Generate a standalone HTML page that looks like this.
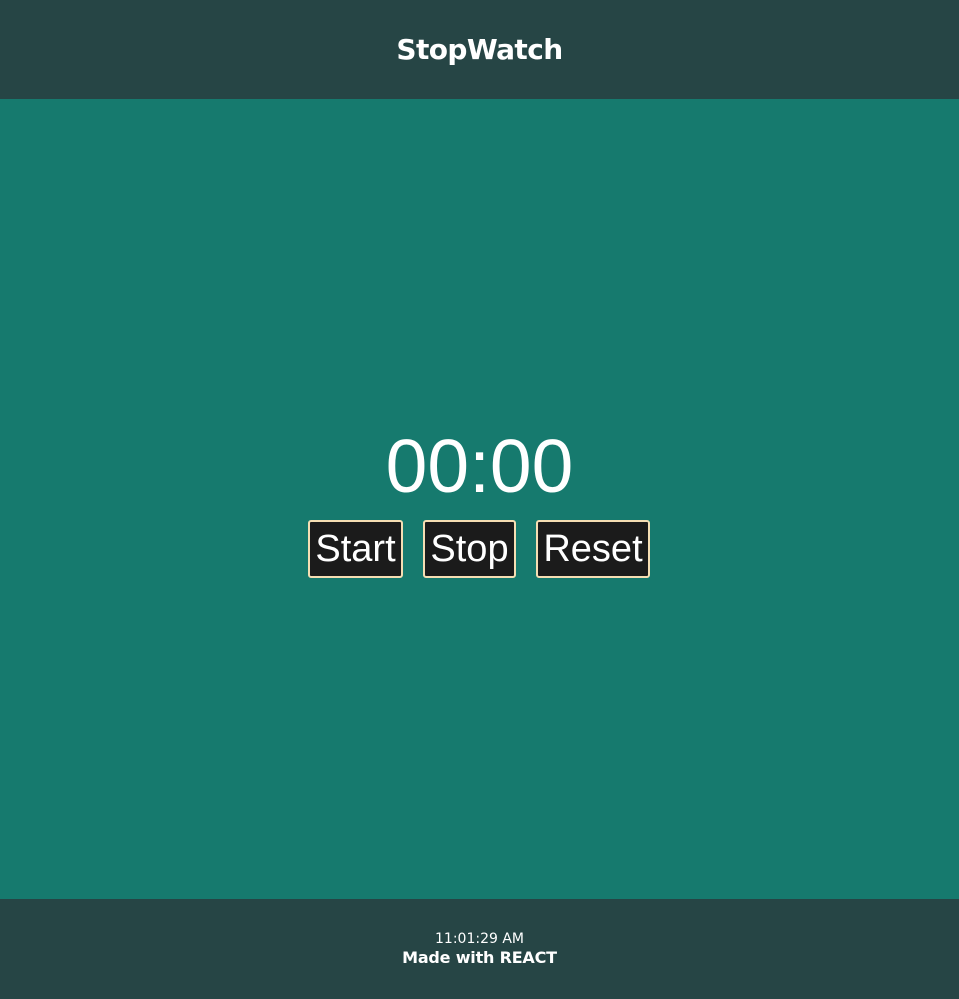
<!DOCTYPE html>
<html><head><style>
html,body{margin:0;padding:0;width:959px;height:999px;overflow:hidden}
body{font-family:"Liberation Sans",sans-serif;background:#167a6e}
header{height:99px;background:#264545;color:#fff;font-weight:bold;font-size:28px;text-align:center;line-height:99px;font-family:"DejaVu Sans","Liberation Sans",sans-serif;letter-spacing:-0.6px}
main{height:800px;position:relative}
.timer{position:absolute;top:322px;left:0;right:0;text-align:center;color:#fff;font-size:75px;line-height:90px}
.btns{position:absolute;top:421px;left:308px;display:flex;gap:20px}
button{background:#1b1b1b;color:#fff;border:2px solid #f5deb3;border-radius:3px;font-family:"Liberation Sans",sans-serif;font-size:38px;height:58px;padding:0;line-height:54px;text-align:center}
footer{height:100px;background:#264545;color:#fff;text-align:center;font-family:"DejaVu Sans","Liberation Sans",sans-serif}
.t{padding-top:32px;font-size:14px;line-height:17px}
.m{font-size:16px;font-weight:bold;line-height:20px;letter-spacing:-0.2px}
</style></head><body>
<header>StopWatch</header>
<main>
<div class="timer">00:00</div>
<div class="btns"><button style="width:95px">Start</button><button style="width:93px">Stop</button><button style="width:114px">Reset</button></div>
</main>
<footer><div class="t">11:01:29 AM</div><div class="m">Made with REACT</div></footer>
</body></html>
